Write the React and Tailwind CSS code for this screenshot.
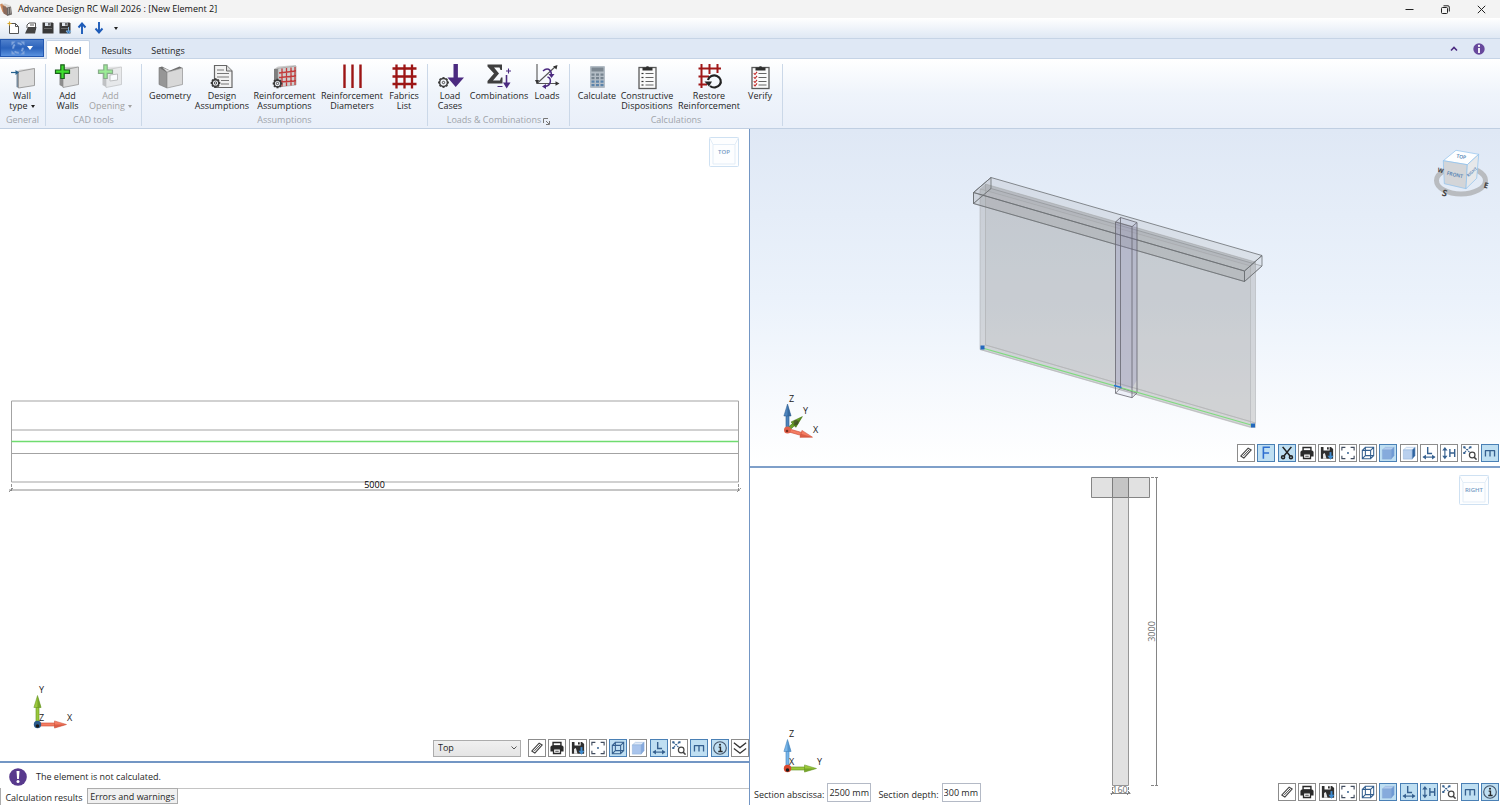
import React from "react";

/* ---------- ribbon icons ---------- */

function Gear({ x, y, r = 4.2 }) {
  const teeth = [0, 45, 90, 135, 180, 225, 270, 315];
  return (
    <g transform={`translate(${x} ${y})`}>
      {teeth.map((a) => (
        <rect key={a} x="-1" y={-r - 0.6} width="2" height="2.4" fill="#3a3a3a" transform={`rotate(${a})`} />
      ))}
      <circle r={r - 0.9} fill="#f2f5fa" stroke="#3a3a3a" strokeWidth="1.5" />
      <circle r="1.2" fill="none" stroke="#3a3a3a" strokeWidth="0.9" />
    </g>
  );
}

function Slab() {
  return (
    <>
      <path d="M5 5.500 8 3 23.500 2.500 20 5Z" fill="#cfcfcf" />
      <path d="M4.500 6 8 5.500V23L4.500 21Z" fill="#8d8d8d" />
      <path d="M8 6 23.500 3V20.500L8 23.500Z" fill="#dadada" stroke="#8b8b8b" strokeWidth=".7" />
    </>
  );
}

function Plus() {
  return (
    <path
      d="M5.800.800h3.400v5.200H14.500v3.400H9.200V14.500H5.800V9.400H.500V6h5.300Z"
      fill="#3fe02f"
      stroke="#1c5f1c"
      strokeWidth="1.200"
    />
  );
}

function Mesh() {
  const at = [4.5, 12.500, 20];
  return (
    <g stroke="#9c1515" strokeWidth="2.300">
      {at.map((p) => (
        <path key={p} d={`M${p} 0.500V24.500M0.500 ${p}H24.500`} />
      ))}
    </g>
  );
}

function Clipboard({ checks }) {
  return (
    <>
      <rect x="4" y="3.500" width="17" height="21" fill="#fafafa" stroke="#5a5a5a" strokeWidth="1.300" />
      <path d="M7.500 6.500V3.500h3.200a2 2 0 0 1 3.600 0H17.500v3Z" fill="#2f2f2f" />
      {[9.5, 13.500, 17.500, 21].map((y) => (
        <g key={y}>
          <path d={`M10.500 ${y}h8`} stroke="#666" strokeWidth="1" />
          {checks ? (
            <path d={`M5.800 ${y - 0.300}l1.200 1.300 2-2.600`} fill="none" stroke="#c02626" strokeWidth="1.100" />
          ) : (
            <path d={`M6.500 ${y}h2`} stroke="#333" strokeWidth="1.200" />
          )}
        </g>
      ))}
    </>
  );
}

const ribbonIcons = {
  wallType: (
    <>
      <path d="M6.500 7 10 5.500 25 4 22 6Z" fill="#dcdcdc" />
      <path d="M6.500 7 8.500 7.500V24L6.500 23Z" fill="#76899b" />
      <path d="M8.500 7.500 24.500 4.500v17L8.500 24Z" fill="#dcdcdc" stroke="#8c8c8c" strokeWidth=".8" />
      <path d="M1 8.500h6" stroke="#27628f" strokeWidth="1.200" />
      <path d="M5.500 6 9 8.500 5.500 11Z" fill="#27628f" />
    </>
  ),
  addWalls: (
    <>
      <Slab />
      <Plus />
    </>
  ),
  addOpening: (
    <g opacity=".5">
      <Slab />
      <path d="M12 11 19.500 10v6l-7.500 1Z" fill="#fff" stroke="#888" />
      <Plus />
    </g>
  ),
  geometry: (
    <>
      <path d="M1 3.500 9 8V24L1 20.500Z" fill="#969696" stroke="#777" strokeWidth=".6" />
      <path d="M1 3.500 4 2.500 12 6.500 21.500 2.500 24.500 4 9 8.500Z" fill="#6e6e6e" />
      <path d="M4.500 3.500 12 6.800V7.500L9 8Z" fill="#dedede" />
      <path d="M9 8.200 24.500 4V20.500L9 24Z" fill="#d8d8d8" stroke="#909090" strokeWidth=".7" />
    </>
  ),
  designAssumptions: (
    <>
      <path d="M4.500 1.500h12l5.500 5.500V23.500H4.500Z" fill="#f2f2f2" stroke="#666" strokeWidth="1.200" />
      <path d="M16.500 1.500V7H22" fill="#ddd" stroke="#666" />
      <path d="M7 6h7M7 9.500h12M7 13h12M11 16.500h8M11 20h8" stroke="#777" strokeWidth="1.200" />
      <Gear x="5.500" y="19" />
    </>
  ),
  reinforcementAssumptions: (
    <>
      <path d="M2 5 6 2.500 24 1 23 3Z" fill="#ccc" />
      <path d="M2 5 6 4.500V20H2Z" fill="#7e7e7e" />
      <path d="M6 4.500 24 2V21L6 23Z" fill="#cfcfcf" stroke="#999" strokeWidth=".6" />
      <path d="M10 4.500V22.500M14.500 4V22M19 3.500V21.500M23 3V21M7 9 24 7M7 13.500 24 12M7 18 24 17" stroke="#c23a3a" strokeWidth="1.300" />
      <Gear x="5.500" y="19.500" />
    </>
  ),
  reinforcementDiameters: <path d="M4.500 0.500V24M12.500 0.500V24M20.500 0.500V24" stroke="#9c1515" strokeWidth="2.400" />,
  fabricsList: <Mesh />,
  loadCases: (
    <>
      <path d="M15.500 0h4.400v13.500H26L17.700 23 9.500 13.500h6Z" fill="#4b2a80" />
      <Gear x="5.500" y="18.500" r={4.800} />
    </>
  ),
  combinations: (
    <>
      <path d="M0.500 0.500H15v5.500h-1.500L12.500 3.500H7l5 6-6 7H13l1-3h1.500v6H0.500V17l6.500-7.500-6.500-7Z" fill="#3f3f3f" />
      <path d="M21.500 4.500v5M19 7h5M10.500 22.500h5" stroke="#4b2a80" strokeWidth="1.100" />
      <path d="M19.500 11V20" stroke="#4b2a80" strokeWidth="1.600" />
      <path d="M16 18.500h7.500L19.700 24.500Z" fill="#4b2a80" />
    </>
  ),
  loads: (
    <>
      <path d="M2 0v19.500h21M2 19.500 20.500 2.500" fill="none" stroke="#555" strokeWidth="1.100" />
      <path d="M20.500 17.300v4.400l4-2.200ZM18 2.500 22.500 1l-1 4.500ZM0 16h4l-2 4Z" fill="#333" />
      <path d="M8 7c4-4 8-2 8.500 4M12.500 13c4 1 4.500 9-3 9.500" fill="none" stroke="#4b2a80" strokeWidth="1.500" />
      <path d="M13.500 10h6l-3 4ZM7 22.500l4-2.500v5Z" fill="#4b2a80" />
    </>
  ),
  calculate: (
    <>
      <rect x="5" y="2" width="15" height="22" rx="1" fill="#b3bcc5" />
      <rect x="6.500" y="3.500" width="12" height="4" fill="#7c8791" />
      {[9.500, 13, 16.500, 20].map((y) =>
        [6.500, 11, 15.500].map((x) => (
          <rect key={`${x}-${y}`} x={x} y={y} width="3" height="2.200" fill={y > 15 ? "#5b83ab" : "#76838f"} />
        ))
      )}
    </>
  ),
  clipboard: <Clipboard />,
  restore: (
    <>
      <path d="M4.500 0V24M12.500 0V10M20.500 0v9M1.500 4.500H24M1.500 12.500H12M1.500 20.500H10" stroke="#a01818" strokeWidth="2" />
      <path d="M13 22a6.500 6 0 1 0-2-6" fill="none" stroke="#222" strokeWidth="2.200" />
      <path d="M7.500 17.500h7.500l-3 5Z" fill="#222" />
    </>
  ),
  verify: <Clipboard checks />,
};

const groups = [
  {
    name: "General",
    box: "w-[46px] px-[3px]",
    items: [{ icon: "wallType", lines: ["Wall", "type"], caret: true, w: "w-[38px]" }],
  },
  {
    name: "CAD tools",
    box: "w-[96px]",
    items: [
      { icon: "addWalls", lines: ["Add", "Walls"], w: "w-[43px]" },
      { icon: "addOpening", lines: ["Add", "Opening"], caret: true, disabled: true, w: "w-[43px]" },
    ],
  },
  {
    name: "Assumptions",
    box: "w-[286px] px-[5px]",
    items: [
      { icon: "geometry", lines: ["Geometry"], w: "w-[46px]" },
      { icon: "designAssumptions", lines: ["Design", "Assumptions"], w: "w-[58px]" },
      { icon: "reinforcementAssumptions", lines: ["Reinforcement", "Assumptions"], w: "w-[67px]" },
      { icon: "reinforcementDiameters", lines: ["Reinforcement", "Diameters"], w: "w-[68px]" },
      { icon: "fabricsList", lines: ["Fabrics", "List"], w: "w-[36px]" },
    ],
  },
  {
    name: "Loads & Combinations",
    launcher: true,
    box: "w-[142px] px-1",
    items: [
      { icon: "loadCases", lines: ["Load", "Cases"], w: "w-[36px]" },
      { icon: "combinations", lines: ["Combinations"], w: "w-[62px]" },
      { icon: "loads", lines: ["Loads"], w: "w-[34px]" },
    ],
  },
  {
    name: "Calculations",
    box: "w-[213px] px-[5px]",
    items: [
      { icon: "calculate", lines: ["Calculate"], w: "w-[44px]" },
      { icon: "clipboard", lines: ["Constructive", "Dispositions"], w: "w-[56px]" },
      { icon: "restore", lines: ["Restore", "Reinforcement"], w: "w-[68px]" },
      { icon: "verify", lines: ["Verify"], w: "w-[34px]" },
    ],
  },
];

function Caret({ className = "" }) {
  return (
    <svg viewBox="0 0 4 3" className={`inline-block h-[3px] w-1 ${className}`} aria-hidden="true">
      <path d="M0 0h4L2 3Z" fill="currentColor" />
    </svg>
  );
}

function RibbonButton({ item }) {
  return (
    <button
      type="button"
      disabled={item.disabled}
      className={`flex flex-col items-center ${item.w} ${item.disabled ? "text-[#a3a3a3]" : "text-[#1f1f1f]"}`}
    >
      <svg viewBox="0 0 25 25" className="h-[25px] w-[25px] overflow-visible" aria-hidden="true">
        {ribbonIcons[item.icon]}
      </svg>
      <span className="mt-[2px] flex flex-col items-center leading-[10px] whitespace-nowrap">
        {item.lines.map((line, i) => (
          <span key={line} className="flex items-center gap-[3px]">
            {line}
            {item.caret && i === item.lines.length - 1 && <Caret />}
          </span>
        ))}
      </span>
    </button>
  );
}

function Ribbon() {
  return (
    <div className="flex h-[70px] shrink-0 border-b border-[#c0cfe2] bg-linear-to-b from-white via-[#eff4fb] to-[#e9eff9] pt-[5px] pb-[2px]">
      {groups.map((g) => (
        <section key={g.name} className={`flex flex-col justify-between border-r border-[#cbd8e8] ${g.box}`}>
          <div className="flex items-start">
            {g.items.map((item) => (
              <RibbonButton key={item.icon} item={item} />
            ))}
          </div>
          <h2 className="flex items-center justify-center gap-[2px] leading-[12px] text-[#a0a4aa]">
            {g.name}
            {g.launcher && (
              <button type="button" aria-label="Load options" className="mt-[2px]">
                <svg viewBox="0 0 7 7" className="h-[7px] w-[7px]" fill="none" stroke="#777">
                  <path d="M.5 5V.5H5M3 3l3 3M6.500 3v3.500H3" />
                </svg>
              </button>
            )}
          </h2>
        </section>
      ))}
    </div>
  );
}

/* ---------- window chrome ---------- */

function TitleBar() {
  return (
    <header className="flex h-[18px] shrink-0 items-center justify-between bg-[#f3f3f3] text-[#111]">
      <div className="flex items-center gap-[5px]">
        <svg viewBox="0 0 13 13" className="h-[13px] w-[13px]" aria-hidden="true">
          <path d="M0 1.500 2 .5 6 3v8L2.500 9Z" fill="#cf8a5c" />
          <path d="M2 1.500 5 .5l6 2.500-3 1.500Z" fill="#d9d5d1" />
          <path d="M2.500 2.500 7 4.500v8L3.500 10.500Z" fill="#8a6a5c" />
          <path d="M7 4.500 11 3.500l1 8-5 1.500Z" fill="#6b6664" />
          <path d="M8.500 5v6M10.500 4.500v6" stroke="#a39e9a" strokeWidth=".8" />
        </svg>
        <h1>Advance Design RC Wall 2026 : [New Element 2]</h1>
      </div>
      <div className="flex pr-px text-[#222]">
        <button type="button" aria-label="Minimize" className="grid w-[36px] place-items-center">
          <svg viewBox="0 0 9 9" className="h-[9px] w-[9px]" stroke="currentColor"><path d="M0.500 4.500h8" /></svg>
        </button>
        <button type="button" aria-label="Restore" className="grid w-[36px] place-items-center">
          <svg viewBox="0 0 9 9" className="h-[9px] w-[9px]" fill="none" stroke="currentColor">
            <rect x=".5" y="2.500" width="6" height="6" rx="1" />
            <path d="M2.500 .8H7a1.300 1.300 0 0 1 1.300 1.300V6.500" />
          </svg>
        </button>
        <button type="button" aria-label="Close" className="grid w-[36px] place-items-center">
          <svg viewBox="0 0 9 9" className="h-[9px] w-[9px]" stroke="currentColor"><path d="m.8.8 7.400 7.400M8.200.8.800 8.200" /></svg>
        </button>
      </div>
    </header>
  );
}

const floppy = (
  <>
    <path d="M.5.500h10l1 1v10H.500Z" fill="#383838" />
    <path d="M3 .5h5.500v3.500H3Z" fill="#dfe5ec" />
    <path d="M6.300 1h1.400v2.500H6.300Z" fill="#383838" />
    <path d="M2 6.500h8" stroke="#777" strokeWidth=".8" />
  </>
);

const quickActions = [
  {
    label: "New",
    art: (
      <>
        <path d="M1.500 1.500h6l3 3v7H1.500Z" fill="#fff" stroke="#555" />
        <path d="M7.500 1.500v3h3" fill="none" stroke="#555" />
        <path d="M1.500-.5v4M-.500 1.500h4" stroke="#d9a92c" strokeWidth="1.200" />
      </>
    ),
  },
  {
    label: "Open",
    art: (
      <>
        <path d="M2 6V3l2-2h6.500v7" fill="#fff" stroke="#555" />
        <path d="M0 11.500 3 5h8.500L10 11.500Z" fill="#444" />
        <path d="M5 3h4" stroke="#555" />
      </>
    ),
  },
  { label: "Save", art: floppy },
  {
    label: "Save as",
    art: (
      <>
        {floppy}
        <path d="M9.500 5v4M7 9h5L9.500 12Z" fill="#2f6fb5" stroke="#7fb0dd" strokeWidth="1" />
      </>
    ),
  },
  { label: "Up", art: <path d="M6 12V2M2.500 5.500 6 1.500l3.500 4" fill="none" stroke="#1d5bb8" strokeWidth="1.900" /> },
  { label: "Down", art: <path d="M6 0v10M2.500 6.500 6 10.500l3.500-4" fill="none" stroke="#1d5bb8" strokeWidth="1.900" /> },
];

function QuickAccess() {
  return (
    <div className="flex h-[21px] shrink-0 items-center border-b border-[#c6d4e6] bg-linear-to-b from-white to-[#dfe8f4] pl-[5px]">
      {quickActions.map((a) => (
        <button key={a.label} type="button" aria-label={a.label} className="grid w-[17px] place-items-center">
          <svg viewBox="0 0 12 12" className="h-3 w-3 overflow-visible">{a.art}</svg>
        </button>
      ))}
      <button type="button" aria-label="More commands" className="grid w-[17px] place-items-center text-[#222]">
        <Caret />
      </button>
    </div>
  );
}

function TabStrip() {
  return (
    <nav className="flex h-[20px] shrink-0 items-end border-b border-[#c6d4e6] bg-[#dfe8f5] text-[#1f1f1f]">
      <button
        type="button"
        aria-label="Application menu"
        className="flex h-[18px] w-[44px] items-center justify-center gap-[2px] self-start border border-[#2257b0] bg-linear-to-b from-[#4f80cc] via-[#2a62bb] to-[#5a92df] text-white"
      >
        <svg viewBox="0 0 14 14" className="h-[14px] w-[14px]">
          <circle cx="7" cy="7" r="4.800" fill="none" stroke="#7ea3dc" strokeWidth="2" strokeDasharray="4.500 3.040" strokeDashoffset="1" />
          <path d="M.5.500h4l-4 4ZM13.500.500v4l-4-4ZM13.500 13.500h-4l4-4ZM.5 13.500v-4l4 4Z" fill="#7ea3dc" />
        </svg>
        <svg viewBox="0 0 6 4" className="h-1 w-[6px]"><path d="M0 0h6L3 4Z" fill="#fff" /></svg>
      </button>
      <button
        type="button"
        aria-current="page"
        className="-mb-px ml-[2px] h-[19px] w-[44px] rounded-t-xs border border-b-0 border-[#c6d4e6] bg-white pt-[2px]"
      >
        Model
      </button>
      <button type="button" className="h-[18px] w-[52px] pt-[3px] pl-px">Results</button>
      <button type="button" className="h-[18px] w-[52px] pt-[3px]">Settings</button>
      <div className="ml-auto flex items-center gap-[15px] self-center pr-[15px]">
        <button type="button" aria-label="Collapse ribbon">
          <svg viewBox="0 0 8 6" className="h-[6px] w-2" fill="none" stroke="#4b2a80" strokeWidth="1.600"><path d="m1 4.500 3-3 3 3" /></svg>
        </button>
        <button type="button" aria-label="About">
          <svg viewBox="0 0 12 12" className="h-3 w-3">
            <circle cx="6" cy="6" r="5.700" fill="#67489c" />
            <path d="M6 5v5" stroke="#fff" strokeWidth="1.800" fill="none" />
            <circle cx="6" cy="2.900" r="1.100" fill="#fff" />
          </svg>
        </button>
      </div>
    </nav>
  );
}

/* ---------- view toolbar ---------- */

const blue = "#35608f";

const cubeFaces = (front, side, top) => (
  <>
    <path d="M1.500 4.500 5 1.500h10L11.500 4.500Z" fill={top} stroke="#86a9d6" strokeWidth=".5" />
    <path d="M11.500 4.500 15 1.500v9.500L11.500 15Z" fill={side} stroke="#86a9d6" strokeWidth=".5" />
    <path d="M1.500 4.500h10V15h-10Z" fill={front} stroke="#86a9d6" strokeWidth=".5" />
  </>
);

const tools = {
  measure: (
    <>
      <path d="M2 11.500 10.500 2.500 14 4.500 5.500 13.800Z" fill="#fff" stroke="#444" strokeWidth="1.300" strokeLinejoin="round" />
      <path d="M5 11.300 11.700 4.300" stroke="#444" strokeWidth="1.100" />
    </>
  ),
  formwork: <path d="M5 14.500V1.500h7.500M5 8h6.500" fill="none" stroke="#2f6fd0" strokeWidth="1.800" />,
  cut: (
    <g fill="none" stroke="#222" strokeWidth="1.800">
      <path d="m3 1 8.500 10.500M13 1 4.500 11.500" />
      <circle cx="3.500" cy="12.800" r="1.700" />
      <circle cx="12.500" cy="12.800" r="1.700" />
    </g>
  ),
  print: (
    <>
      <path d="M3.500 1.700h9v4h-9Z" fill="#fff" stroke="#2a2a2a" strokeWidth="1.600" />
      <path d="M2 5h12l1.500 1.500V12H.500V6.500Z" fill="#2a2a2a" />
      <path d="M4 9h8v5.300H4Z" fill="#fff" stroke="#2a2a2a" strokeWidth="1.500" />
      <path d="M6 11.700h4" stroke="#2a2a2a" />
    </>
  ),
  save: (
    <>
      <path d="M1 1h3v4h7V1h1.500L15 3.500V14.500H1Z" fill="#2f2f2f" />
      <path d="M8 1.500h2V4H8Z" fill="#2f2f2f" />
      <path d="M3.500 14.500V9l2-1 2 6.500Z" fill="#e9e9e9" />
      <path d="M12 7v5" stroke="#3f8bd0" strokeWidth="2.200" />
      <path d="M8.500 11h7L12 15.800Z" fill="#3f8bd0" />
    </>
  ),
  fit: (
    <>
      <path d="M1 5V1.500h4M11 1.500h4V5M15 11v3.500h-4M5 14.500H1V11" fill="none" stroke="#414c5e" strokeWidth="1.300" />
      <circle cx="8" cy="8" r="1.100" fill={blue} />
    </>
  ),
  wire: <path d="M1.500 5H11v9.500H1.500ZM5 1.500h9.500v9.500H5ZM1.500 5 5 1.500M11 5l3.500-3.500M11 14.500l3.500-3.500M1.500 14.500 5 11" fill="none" stroke={blue} strokeWidth="1.200" />,
  solid: cubeFaces("#86abdc", "#6f9ad4", "#b3cbee"),
  soft: cubeFaces("#a9c4ec", "#86a9de", "#dfe9f8"),
  shaded: cubeFaces("#b9d0ee", "#2f639f", "#f1f6fd"),
  dimL: (
    <>
      <path d="M6.500 1v7.500h5" fill="none" stroke={blue} strokeWidth="1.600" />
      <path d="M2 12.700h12" stroke={blue} strokeWidth="1.300" />
      <path d="M4.500 9.900v5.600L.5 12.700ZM11.500 9.900v5.600l4-2.800Z" fill={blue} />
    </>
  ),
  dimH: (
    <>
      <path d="M3.300 3v10" stroke={blue} strokeWidth="1.300" />
      <path d="M.3 5h6L3.300 1ZM.3 11h6l-3 4Z" fill={blue} />
      <path d="M9 3.500v9M14.500 3.500v9M9 8h5.500" stroke={blue} strokeWidth="1.600" />
    </>
  ),
  zoom: (
    <>
      <path d="m1.500 1.500 6.500 6M8 1.500l-6.500 6" stroke={blue} strokeWidth="1.200" strokeDasharray="2 1" />
      <path d="M.3.300h2.400v2.400H.300ZM7.300.300h2.400v2.400H7.300ZM.3 6.800h2.400v2.400H.300Z" fill={blue} />
      <circle cx="10.500" cy="10.300" r="3.200" fill="#fff" stroke="#444" strokeWidth="1.400" />
      <path d="m12.700 12.700 2.800 2.800" stroke="#444" strokeWidth="1.800" />
    </>
  ),
  rebar: <path d="M2.800 12V5.300H13.200V12M8 5.300V12" fill="none" stroke={blue} strokeWidth="1.500" strokeLinejoin="round" />,
  info: (
    <>
      <circle cx="8" cy="8" r="7.200" fill="none" stroke="#44566c" strokeWidth="1.300" />
      <path d="M6.500 7H8.500v4.500M6 12h5" fill="none" stroke="#2a2a2a" strokeWidth="1.600" />
      <circle cx="8" cy="4.300" r="1.200" fill="#2a2a2a" />
    </>
  ),
  more: <path d="m1 2 7 5.500L15 2M1 8.500 8 14l7-5.500" fill="none" stroke="#333" strokeWidth="1.500" />,
};

const toolNames = {
  measure: "Measure",
  formwork: "Formwork",
  cut: "Cut",
  print: "Print",
  save: "Save image",
  fit: "Fit to view",
  wire: "Wireframe",
  solid: "Solid",
  soft: "Transparent",
  shaded: "Shaded",
  dimL: "Length dimensions",
  dimH: "Height dimensions",
  zoom: "Zoom window",
  rebar: "Rebar",
  info: "Information",
  more: "More tools",
};

function Toolbar({ items, active, className }) {
  return (
    <div role="toolbar" className={`flex justify-between ${className}`}>
      {items.map((id) => {
        const on = active.includes(id);
        return (
          <button
            key={id}
            type="button"
            aria-label={toolNames[id]}
            aria-pressed={on}
            className={`grid h-[18px] w-[18px] place-items-center border ${
              on ? "border-[#4a80b5] bg-[#bfdff2]" : "border-[#8c8c8c] bg-white"
            }`}
          >
            <svg viewBox="0 0 16 16" className="h-[14px] w-[14px]">{tools[id]}</svg>
          </button>
        );
      })}
    </div>
  );
}

function FaceCube({ label }) {
  return (
    <button type="button" aria-label={`View ${label}`} className="h-[30px] w-[30px]">
      <svg viewBox="0 0 30 30" className="h-[30px] w-[30px]" fill="none">
        <rect x=".5" y=".5" width="29" height="29" rx="1" fill="#fdfeff" stroke="#cfe1f2" />
        <path d="M4 7.500 .5.500M26 7.500l3.500-7M4 7.500h22V27H4Z" stroke="#e3edf7" />
        <text x="15" y="17" textAnchor="middle" className="fill-[#7399c4] text-[6px] font-semibold">{label}</text>
      </svg>
    </button>
  );
}

/* Orientation axes: one arrow per visible axis, the third one points at the viewer. */
function Arrow({ x, y, angle, length, color, edge }) {
  return (
    <g transform={`translate(${x} ${y}) rotate(${angle})`}>
      <rect x="0" y="-1.500" width={length - 11} height="3" fill={color} stroke={edge} strokeWidth=".6" />
      <path d={`M${length - 12}-3.600 ${length} 0 ${length - 12} 3.600Z`} fill={color} stroke={edge} strokeWidth=".5" />
      <path d={`M${length - 12} 0 ${length} 0 ${length - 12} 3.600Z`} fill={edge} opacity=".6" />
    </g>
  );
}

function Axes({ up, right, toward, labels }) {
  return (
    <svg viewBox="0 0 50 50" className="h-[50px] w-[50px] overflow-visible">
      <Arrow x={9.5} y={41.500} angle={-90} length={29} color={up[0]} edge={up[1]} />
      <Arrow x={9.5} y={41.500} angle={0} length={29} color={right[0]} edge={right[1]} />
      <circle cx="9.500" cy="41.500" r="3.700" fill={toward} />
      <circle cx="9.500" cy="43" r="1.800" fill="#1a1a1a" />
      <g className="fill-[#222] text-[9px]">
        <text x="11" y="10">{labels[0]}</text>
        <text x="39" y="38">{labels[1]}</text>
        <text x="11" y="38">{labels[2]}</text>
      </g>
    </svg>
  );
}

const RED = ["#f47c62", "#c94a34"];
const GREEN = ["#9bc83c", "#5f8f1c"];
const SKY = ["#78b6ea", "#3d7fb9"];
const STEEL = ["#4d84bd", "#2b5a8c"];

/* ---------- views ---------- */

function TopView() {
  return (
    <div className="relative min-h-0 flex-1 bg-white">
      <svg viewBox="0 129 749 632" className="absolute inset-0 h-full w-full" fill="none" stroke="#a3a3a3">
        <path d="M11.500 401h727v81h-727ZM11.500 430h727M11.500 453.500h727" />
        <path d="M11.500 441.500h727" stroke="#6fdc6f" strokeWidth="1.400" />
        <path d="M9 490h731" stroke="#8c8c8c" />
        <path d="M9 492l4-4M737 492l4-4M11.500 484v8M738.500 484v8" stroke="#777" strokeWidth=".8" strokeDasharray="3 1" />
        <text x="374.500" y="488" textAnchor="middle" stroke="none" className="fill-black text-[9px]">5000</text>
      </svg>
      <div className="relative flex h-full flex-col justify-between">
        <div className="flex justify-end pt-2 pr-[10px]">
          <FaceCube label="TOP" />
        </div>
        <div className="flex items-end justify-between pb-1 pl-7">
          <div className="mb-6">
            <Axes up={GREEN} right={RED} toward={STEEL[1]} labels={["Y", "X", "Z"]} />
          </div>
          <div className="flex items-center gap-[7px]">
            <div className="relative flex items-center">
              <select
                aria-label="View direction"
                className="h-[17px] w-[88px] appearance-none border border-[#acacac] bg-linear-to-b from-[#f0f0f0] to-[#e5e5e5] pl-1 text-[#1f1f1f]"
              >
                <option>Top</option>
                <option>Front</option>
                <option>Right</option>
              </select>
              <svg viewBox="0 0 6 4" className="pointer-events-none absolute right-1 h-1 w-[6px]" fill="none" stroke="#555">
                <path d="m.5.500 2.500 2.500L5.500.500" />
              </svg>
            </div>
            <Toolbar
              className="w-[221px]"
              items={["measure", "print", "save", "fit", "wire", "soft", "dimL", "zoom", "rebar", "info", "more"]}
              active={["wire", "dimL", "rebar", "info"]}
            />
          </div>
        </div>
      </div>
    </div>
  );
}

function StatusPanel() {
  return (
    <footer className="flex h-11 shrink-0 flex-col border-t-2 border-[#7396c4] bg-white text-[#1f1f1f]">
      <div className="flex flex-1 items-center gap-[9px] pt-[3px] pl-[9px]">
        <svg viewBox="0 0 18 18" className="h-[18px] w-[18px]" aria-hidden="true">
          <circle cx="9" cy="9" r="8.800" fill="#58398d" />
          <path d="M7.500 3h3l-.6 8H8.100Z" fill="#fff" />
          <circle cx="9" cy="13.500" r="1.500" fill="#fff" />
        </svg>
        <p>The element is not calculated.</p>
      </div>
      <div role="tablist" className="flex h-[17px] items-start">
        <button type="button" role="tab" aria-selected="true" className="h-full w-[87px] border-l border-[#acacac] pt-[2px]">
          Calculation results
        </button>
        <button type="button" role="tab" aria-selected="false" className="h-4 w-[91px] border border-[#acacac] bg-[#f0f0f0] pt-px">
          Errors and warnings
        </button>
        <div className="flex-1 border-t border-[#c4c4c4]" />
      </div>
    </footer>
  );
}

function NavigationCube() {
  return (
    <svg viewBox="1430 148 62 54" className="h-[54px] w-[62px] overflow-visible" aria-label="Navigation cube">
      <ellipse cx="1461" cy="180.500" rx="24.500" ry="13.500" fill="none" stroke="#b9bcc0" strokeWidth="5" />
      <path d="M1443.300 160.700 1456 150.300 1478.700 154.300 1467.300 164.700Z" fill="#fdfeff" stroke="#8fc2ec" strokeWidth=".7" />
      <path d="M1443.300 160.700 1467.300 164.700 1466 188.700 1444.300 183.700Z" fill="#d3d5d8" stroke="#8fc2ec" strokeWidth=".7" />
      <path d="M1467.300 164.700 1478.700 154.300 1476.700 178.300 1466 188.700Z" fill="#e6e8ea" stroke="#8fc2ec" strokeWidth=".7" />
      <g textAnchor="middle" className="fill-[#4a7bb0] font-semibold">
        <text className="text-[5px]" transform="translate(1461 158.500) rotate(8)">TOP</text>
        <text className="text-[5px]" transform="translate(1454.500 176.500) rotate(12)">FRONT</text>
        <text className="text-[4px]" transform="translate(1473 173) rotate(-42)">RIGHT</text>
      </g>
      <g textAnchor="middle" className="fill-[#444] font-bold">
        <text className="text-[6px]" transform="translate(1440 172.500) rotate(14)">W</text>
        <text className="text-[9px]" transform="translate(1444 196) rotate(14)">S</text>
        <text className="text-[8px]" transform="translate(1485.500 188) rotate(14)">E</text>
      </g>
    </svg>
  );
}

function WallModel() {
  return (
    <svg viewBox="750 129 750 337" className="absolute inset-0 h-full w-full" fill="none">
      {/* wall */}
      <path d="M985.500 184 1255.500 262V423L985.500 345Z" fill="#8c8c8c" fillOpacity=".2" stroke="#b4b7ba" strokeWidth=".6" />
      <path d="M980 189 1250.500 266V427L980 349.500Z" fill="#8c8c8c" fillOpacity=".2" stroke="#b4b7ba" strokeWidth=".6" />
      <path d="M980 189 985.500 184V345L980 349.500ZM1250.500 266 1255.500 262V427H1250.500Z" fill="#999" fillOpacity=".15" />
      <path d="M980 349.500 985.500 345 1255.500 423V427.500H1250.500Z" fill="#999" fillOpacity=".2" stroke="#b5b5b5" strokeWidth=".5" />
      <path d="M980 189 985.500 184 1255.500 262 1250.500 266Z" fill="#777" fillOpacity=".2" />
      {/* beam */}
      <g stroke="#6b6e72" strokeWidth=".8" fill="#8a8a8a">
        <path d="M991 177.500 973.500 192.500 1244.500 271 1262 255.500Z" fillOpacity=".14" />
        <path d="M991 188.500 973.500 203.500 1244.500 281.500 1262 266Z" fillOpacity=".1" stroke="#8a8d91" strokeWidth=".6" />
        <path d="M973.500 192.500V203.500L1244.500 281.500V271Z" fillOpacity=".14" />
        <path d="M1244.500 271V281.500L1262 266V255.500ZM973.500 192.500V203.500L991 188.500V177.500Z" fillOpacity=".1" />
      </g>
      {/* column */}
      <g stroke="#66666f" strokeWidth=".8" fill="#8583b8">
        <path d="M1115.500 222 1132 226.700 1137 222.500V380L1132 388.500 1115.500 385Z" fillOpacity=".24" stroke="none" />
        <path d="M1120.500 217.500 1137 222.500 1132 226.700 1115.500 222Z" fillOpacity=".15" />
        <path d="M1120.500 388 1137 393 1132 397.700 1115.500 393.300Z" fillOpacity=".08" />
        <path d="M1115.500 222V393.300M1120.500 217.500V388M1132 226.700V397.700M1137 222.500V393" />
      </g>
      {/* base line and its end grips */}
      <path d="M982.500 348 1253 425.500" stroke="#7fdb7f" strokeWidth="1.200" />
      <path d="M1114 385.500 1121.500 387.500" stroke="#2673d8" strokeWidth="1.300" />
      <path d="M980.500 345.500h4v4h-4ZM1251 423.500h4v4h-4Z" fill="#2368bd" />
    </svg>
  );
}

function PerspectiveView() {
  return (
    <div className="relative min-h-0 flex-1 bg-linear-to-b from-[#dfe8f5] via-[#ebf2fb] to-white">
      <WallModel />
      <div className="relative flex h-full flex-col justify-between">
        <div className="flex justify-end pt-[19px] pr-2">
          <NavigationCube />
        </div>
        <div className="flex items-end justify-between pr-px pb-1 pl-7">
          <svg viewBox="778 392 46 50" className="mb-5 h-[50px] w-[46px] overflow-visible">
            <Arrow x={787.5} y={430} angle={-42} length={20} color="#6ea32a" edge="#3f6e10" />
            <circle cx="796" cy="422.500" r="2.500" fill="#3b3b2c" opacity=".6" />
            <Arrow x={787.5} y={430} angle={-90} length={26} color={STEEL[0]} edge={STEEL[1]} />
            <Arrow x={787.5} y={430} angle={16} length={26} color={RED[0]} edge={RED[1]} />
            <circle cx="787.500" cy="430" r="3.500" fill="#e2614a" />
            <circle cx="787" cy="431" r="1.300" fill="#7a2a1c" />
            <g className="fill-[#222] text-[9px]">
              <text x="789" y="402">Z</text>
              <text x="803" y="414">Y</text>
              <text x="813" y="433">X</text>
            </g>
          </svg>
          <Toolbar
            className="w-[262px]"
            items={["measure", "formwork", "cut", "print", "save", "fit", "wire", "solid", "shaded", "dimL", "dimH", "zoom", "rebar"]}
            active={["formwork", "cut", "solid", "rebar"]}
          />
        </div>
      </div>
    </div>
  );
}

function Field({ id, label, value, width }) {
  return (
    <div className="flex items-center gap-[3px]">
      <label htmlFor={id} className="pt-1">{label}</label>
      <input id={id} defaultValue={value} className={`h-[19px] border border-[#b4bac6] bg-white pl-px ${width}`} />
    </div>
  );
}

function SectionView() {
  return (
    <div className="relative min-h-0 flex-1 border-t-2 border-[#7f9fc9] bg-white">
      <svg viewBox="750 468 750 337" className="absolute inset-0 h-full w-full" stroke="#858585" fill="none">
        <path d="M1091.500 477.500h58v20h-58Z" fill="#e1e1e1" />
        <path d="M1112.500 477.500h16v308h-16Z" fill="#c4c4c4" fillOpacity=".5" stroke="#969696" />
        <path d="M1112.500 477.500h16v20h-16Z" fill="#bdbdbd" fillOpacity=".6" stroke="#7d7d7d" />
        <path d="M1156.500 477v309" />
        <path d="M1151 477.500h7M1151 785.500h7M1112.500 787v8M1128.500 787v8" strokeDasharray="3 1" />
        <path d="M1110.500 793.500h20M1111 795l3-3M1127 795l3-3" />
        <g stroke="none" textAnchor="middle" className="fill-[#6e6e6e] text-[9px]">
          <text transform="translate(1155 631.500) rotate(-90)">3000</text>
          <text x="1120" y="793">160</text>
        </g>
      </svg>
      <div className="relative flex h-full flex-col justify-between">
        <div className="flex justify-end pt-[7px] pr-[11px]">
          <FaceCube label="RIGHT" />
        </div>
        <div className="flex items-end justify-between pr-px pb-[3px] pl-1">
          <div className="flex flex-col gap-[6px]">
            <div className="pl-6">
              <Axes up={SKY} right={GREEN} toward="#d9482f" labels={["Z", "Y", "X"]} />
            </div>
            <div className="flex gap-[7px] text-[#1f1f1f]">
              <Field id="abscissa" label="Section abscissa:" value="2500 mm" width="w-[44px]" />
              <Field id="depth" label="Section depth:" value="300 mm" width="w-[39px]" />
            </div>
          </div>
          <Toolbar
            className="mb-px w-[221px]"
            items={["measure", "print", "save", "fit", "wire", "solid", "dimL", "dimH", "zoom", "rebar", "info"]}
            active={["solid", "dimL", "dimH", "rebar", "info"]}
          />
        </div>
      </div>
    </div>
  );
}

export default function App() {
  return (
    <div className="flex h-screen flex-col overflow-hidden font-['Open_Sans','Noto_Sans',sans-serif] text-[9px] leading-[12px]">
      <TitleBar />
      <QuickAccess />
      <TabStrip />
      <Ribbon />
      <main className="grid min-h-0 flex-1 grid-cols-2">
        <div className="flex min-h-0 flex-col border-r border-[#7396c4]">
          <TopView />
          <StatusPanel />
        </div>
        <div className="flex min-h-0 flex-col">
          <PerspectiveView />
          <SectionView />
        </div>
      </main>
    </div>
  );
}
